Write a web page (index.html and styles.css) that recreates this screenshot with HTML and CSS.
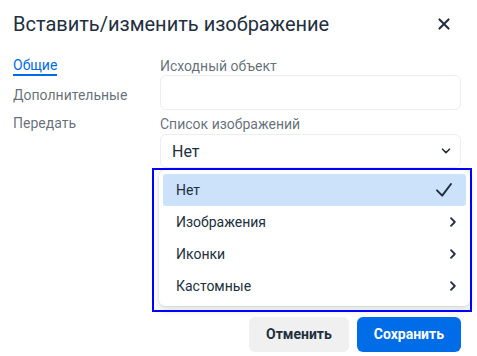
FILE: index.html
```html
<!DOCTYPE html>
<html lang="ru">
<head>
    <meta charset="UTF-8">
    <title>Вставить/изменить изображение</title>
    <link rel="stylesheet" href="styles.css">
</head>
<body>

<div class="dialog">
    <div class="dialog-header">
        <div class="title">Вставить/изменить изображение</div>
        <a class="close" href="#">
            <svg width="24" height="24" viewBox="0 0 24 24"><path fill="#222f3e" d="M17.3 8.2L13.4 12l3.9 3.8a1 1 0 0 1-1.5 1.5L12 13.4l-3.8 3.9a1 1 0 0 1-1.5-1.5l3.9-3.8-3.9-3.8a1 1 0 0 1 1.5-1.5l3.8 3.9 3.8-3.9a1 1 0 0 1 1.5 1.5z"/></svg>
        </a>
    </div>

    <div class="dialog-body">
        <ul class="tabs">
            <li class="active">Общие</li>
            <li>Дополнительные</li>
            <li>Передать</li>
        </ul>
        <div class="panel">
            <label class="label">Исходный объект</label>
            <div class="input"></div>
            <label class="label second">Список изображений</label>
            <div class="select">
                <span>Нет</span>
                <svg width="10" height="6" viewBox="0 0 10 6"><path d="M1.5 1.2L5 4.6l3.5-3.4" fill="none" stroke="#222f3e" stroke-width="1.6" stroke-linecap="round" stroke-linejoin="round"/></svg>
            </div>
        </div>
    </div>

    <div class="dialog-footer">
        <a class="btn cancel" href="#">Отменить</a>
        <a class="btn save" href="#">Сохранить</a>
    </div>

    <div class="menu">
        <div class="item selected">
            <span>Нет</span>
            <svg width="18" height="16" viewBox="0 0 18 16"><path d="M2 8.4l5.2 5.2L16 2" fill="none" stroke="#222f3e" stroke-width="2" stroke-linecap="round" stroke-linejoin="round"/></svg>
        </div>
        <div class="item">
            <span>Изображения</span>
            <svg width="8" height="10" viewBox="0 0 8 10"><path d="M2 1.2L5.8 5 2 8.8" fill="none" stroke="#222f3e" stroke-width="1.8" stroke-linecap="round" stroke-linejoin="round"/></svg>
        </div>
        <div class="item">
            <span>Иконки</span>
            <svg width="8" height="10" viewBox="0 0 8 10"><path d="M2 1.2L5.8 5 2 8.8" fill="none" stroke="#222f3e" stroke-width="1.8" stroke-linecap="round" stroke-linejoin="round"/></svg>
        </div>
        <div class="item">
            <span>Кастомные</span>
            <svg width="8" height="10" viewBox="0 0 8 10"><path d="M2 1.2L5.8 5 2 8.8" fill="none" stroke="#222f3e" stroke-width="1.8" stroke-linecap="round" stroke-linejoin="round"/></svg>
        </div>
    </div>
    <div class="outline"></div>
</div>

</body>
</html>
```

FILE: styles.css
```css
body {
    margin: 0;
    background: #fff;
    font-family: Roboto, "Noto Sans", sans-serif;
    color: #222f3e;
}

ul {
    margin: 0;
    padding: 0;
    list-style: none;
}

a {
    text-decoration: none;
}

.dialog {
    position: relative;
    width: 473px;
    height: 356px;
    display: flex;
    flex-direction: column;
    background: #fff;
    border-top-right-radius: 10px;
}

.dialog-header {
    height: 48px;
    display: flex;
    align-items: center;
    justify-content: space-between;
    padding: 0 17px 0 13px;
}

.dialog-header > .title {
    font-size: 20px;
    line-height: 24px;
}

.dialog-header > .close {
    display: flex;
}

.dialog-body {
    height: 260px;
    display: flex;
    padding: 9px 12px 0 13px;
}

.tabs {
    width: 147px;
    display: flex;
    flex-direction: column;
    align-items: flex-start;
    gap: 10px;
}

.tabs > li {
    font-size: 14px;
    line-height: 18px;
    color: rgba(34, 47, 62, .7);
}

.tabs > li.active {
    line-height: 17px;
    color: #006ce7;
    border-bottom: 2px solid #006ce7;
}

.panel {
    flex: 1;
    display: flex;
    flex-direction: column;
}

.panel > .label {
    font-size: 14px;
    line-height: 18px;
    color: rgba(34, 47, 62, .7);
}

.panel > .label.second {
    margin-top: 5px;
    margin-bottom: 1px;
}

.panel > .input,
.panel > .select {
    height: 35px;
    box-sizing: border-box;
    border: 1px solid #eee;
    border-radius: 6px;
}

.panel > .select {
    height: 34px;
    display: flex;
    align-items: center;
    justify-content: space-between;
    padding: 0 9px 0 11px;
    font-size: 16px;
}

.dialog-footer {
    display: flex;
    justify-content: flex-end;
    gap: 8px;
    padding: 0 12px;
}

.btn {
    height: 35px;
    line-height: 35px;
    padding: 0 17px;
    border-radius: 6px;
    font-size: 14px;
    font-weight: 700;
}

.btn.cancel {
    background: #f0f0f0;
    color: #222f3e;
}

.btn.save {
    background: #006ce7;
    color: #fff;
}

.menu {
    position: absolute;
    left: 159px;
    top: 170px;
    width: 311px;
    box-sizing: border-box;
    padding: 4px;
    background: #fff;
    border-radius: 6px;
    box-shadow: 0 0 2px rgba(34, 47, 62, .2), 0 4px 8px rgba(34, 47, 62, .15);
}

.menu > .item {
    height: 32px;
    display: flex;
    align-items: center;
    justify-content: space-between;
    padding: 0 9px 0 13px;
    border-radius: 3px;
    font-size: 14px;
}

.menu > .item.selected {
    background: #cce2fa;
    padding-right: 13px;
}

.outline {
    position: absolute;
    left: 152px;
    top: 168px;
    width: 320px;
    height: 144px;
    box-sizing: border-box;
    border: 2px solid #00f;
}
```
